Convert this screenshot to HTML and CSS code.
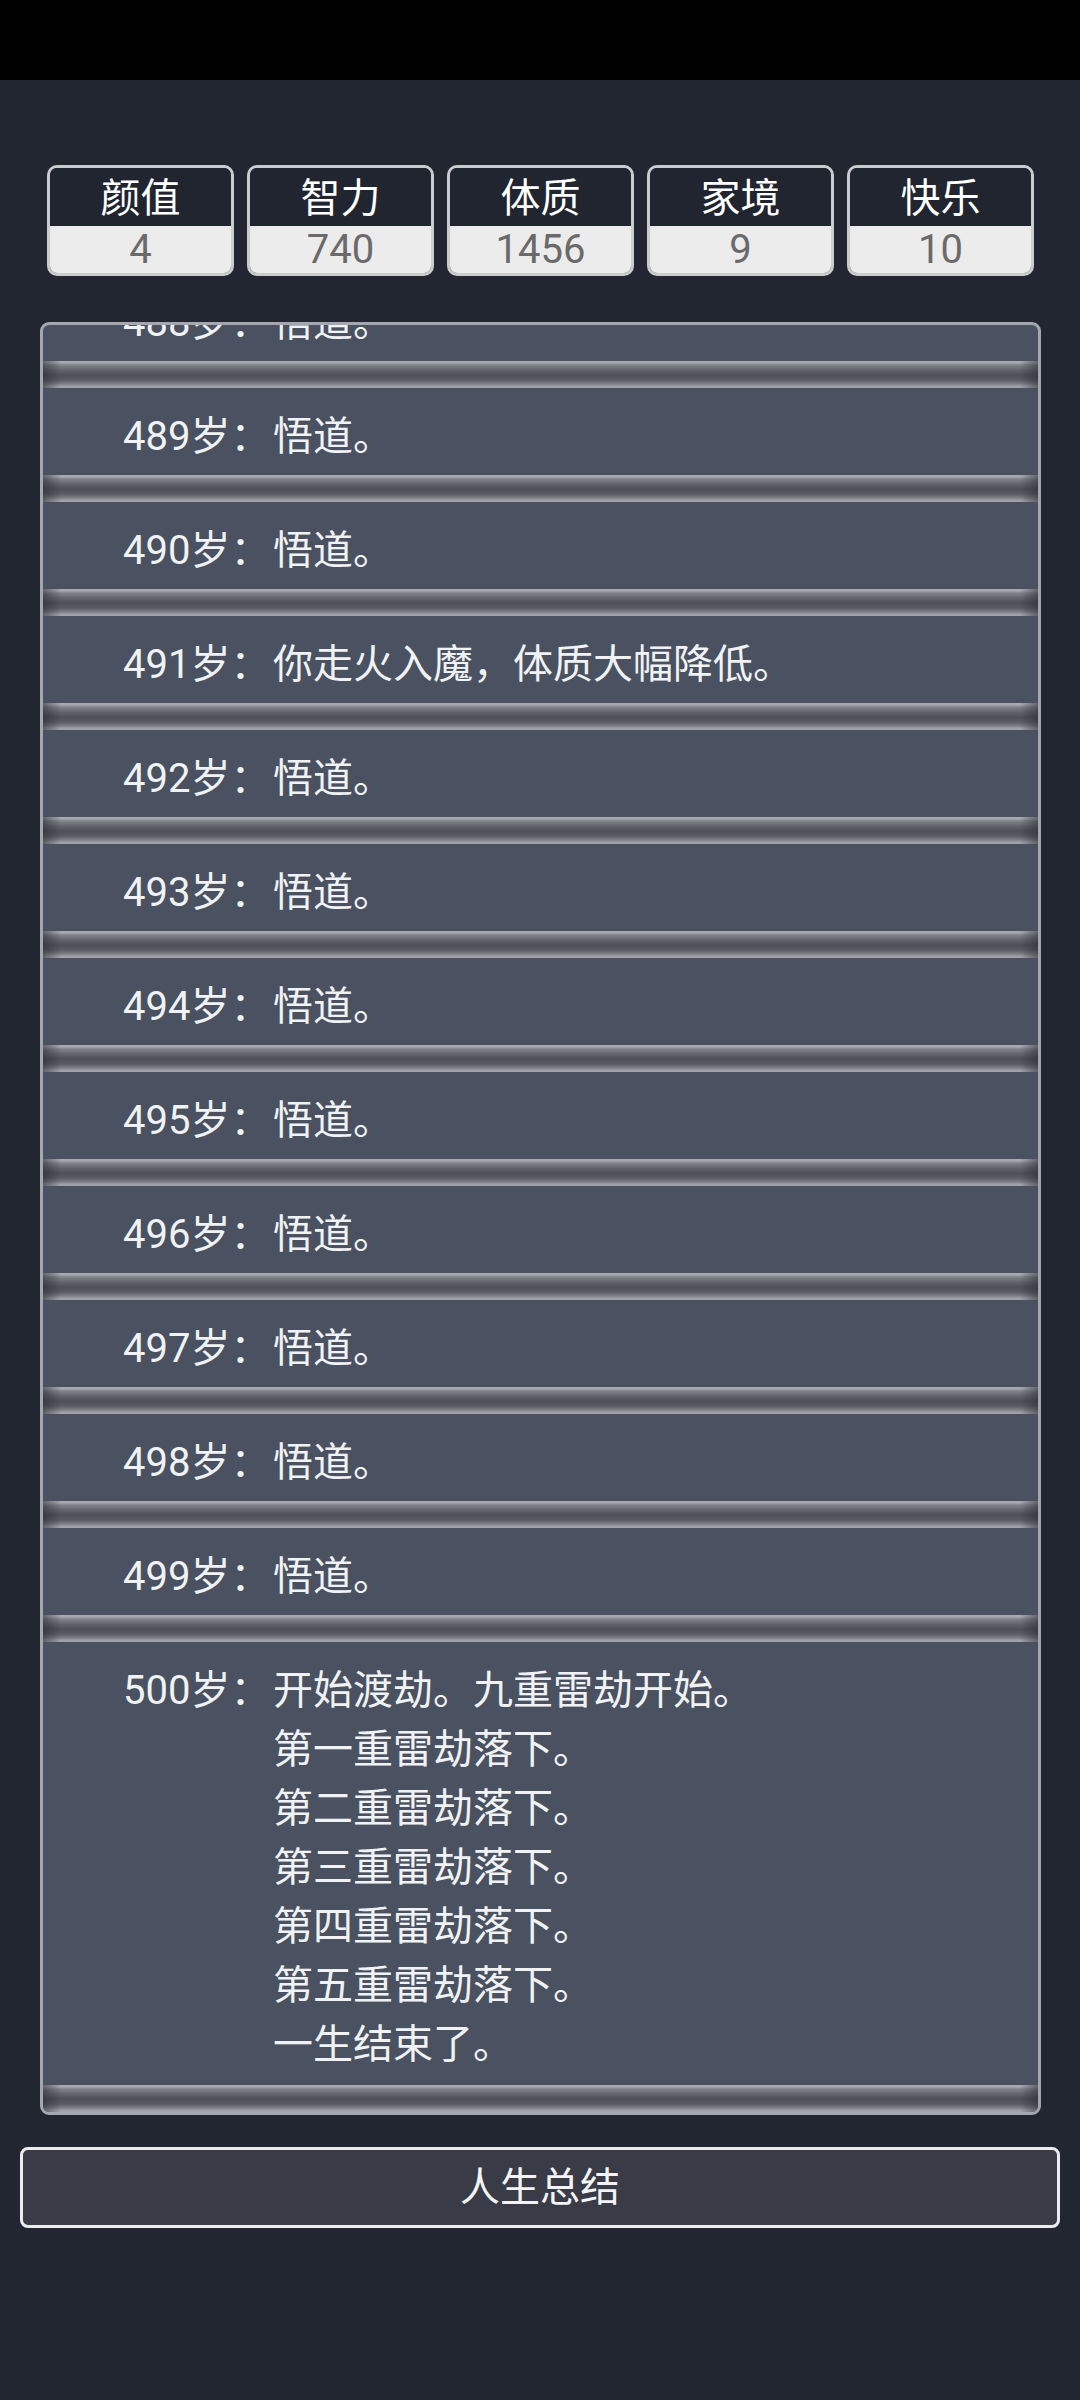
FILE: index.html
```html
<!DOCTYPE html>
<html lang="zh-CN">
<head>
<meta charset="utf-8">
<meta name="viewport" content="width=1080">
<title>人生重开</title>
<link rel="stylesheet" href="styles.css">
</head>
<body>
<div class="statusbar"></div>
<main class="page">
  <section class="stats">
    <div class="stat"><div class="stat-name">颜值</div><div class="stat-val">4</div></div>
    <div class="stat"><div class="stat-name">智力</div><div class="stat-val">740</div></div>
    <div class="stat"><div class="stat-name">体质</div><div class="stat-val">1456</div></div>
    <div class="stat"><div class="stat-name">家境</div><div class="stat-val">9</div></div>
    <div class="stat"><div class="stat-name">快乐</div><div class="stat-val">10</div></div>
  </section>
  <section class="log">
    <ul class="log-list">
      <li class="row"><span class="age">487岁：</span><span class="msg">悟道。</span></li>
      <li class="row"><span class="age">488岁：</span><span class="msg">悟道。</span></li>
      <li class="row"><span class="age">489岁：</span><span class="msg">悟道。</span></li>
      <li class="row"><span class="age">490岁：</span><span class="msg">悟道。</span></li>
      <li class="row"><span class="age">491岁：</span><span class="msg">你走火入魔，体质大幅降低。</span></li>
      <li class="row"><span class="age">492岁：</span><span class="msg">悟道。</span></li>
      <li class="row"><span class="age">493岁：</span><span class="msg">悟道。</span></li>
      <li class="row"><span class="age">494岁：</span><span class="msg">悟道。</span></li>
      <li class="row"><span class="age">495岁：</span><span class="msg">悟道。</span></li>
      <li class="row"><span class="age">496岁：</span><span class="msg">悟道。</span></li>
      <li class="row"><span class="age">497岁：</span><span class="msg">悟道。</span></li>
      <li class="row"><span class="age">498岁：</span><span class="msg">悟道。</span></li>
      <li class="row"><span class="age">499岁：</span><span class="msg">悟道。</span></li>
      <li class="row"><span class="age">500岁：</span><span class="msg">开始渡劫。九重雷劫开始。<br>第一重雷劫落下。<br>第二重雷劫落下。<br>第三重雷劫落下。<br>第四重雷劫落下。<br>第五重雷劫落下。<br>一生结束了。</span></li>
    </ul>
  </section>
  <button class="summary" type="button">人生总结</button>
</main>
</body>
</html>
```

FILE: styles.css
```css
* { box-sizing: border-box; }

html, body {
  margin: 0;
  padding: 0;
  background: #222631;
}

body {
  width: 1080px;
  height: 2400px;
  overflow: hidden;
  font-family: Roboto, "Noto Sans CJK SC", "Noto Sans", sans-serif;
  color: #f2f3f5;
}

.statusbar {
  height: 80px;
  background: #000;
}

.page {
  display: flex;
  flex-direction: column;
  align-items: stretch;
}

/* ---------- stats ---------- */
.stats {
  display: flex;
  gap: 13px;
  padding: 85px 46px 0 47px;
}

.stat {
  flex: 1 1 0;
  border: 3px solid #cacbcd;
  border-radius: 10px;
  overflow: hidden;
  text-align: center;
  font-size: 40px;
}

.stat-name {
  background: #212530;
  color: #ffffff;
  height: 58px;
  line-height: 54px;
  padding-top: 4px;
}

.stat-val {
  background: #ececec;
  color: #6a6a6a;
  line-height: 47px;
  height: 47px;
}

/* ---------- log panel ---------- */
.log {
  margin: 46px 39px 0 40px;
  height: 1793px;
  border: 3px solid #a4a7ad;
  border-radius: 9px;
  background: #4a5262;
  overflow: hidden;
  display: flex;
  flex-direction: column;
  justify-content: flex-end;
}

.log-list {
  list-style: none;
  margin: 0;
  padding: 0;
  flex: none;
}

.row {
  display: flex;
  align-items: flex-start;
  padding: 19px 20px 9px 80px;
  font-size: 40px;
  line-height: 59px;
  color: #f1f2f4;
  position: relative;
  margin-bottom: 27px;
}

.row:last-child {
  padding-bottom: 11px;
}

.row::after {
  content: "";
  position: absolute;
  left: 0;
  right: 0;
  bottom: -27px;
  height: 27px;
  background:
    linear-gradient(to right, rgba(40,42,48,.55) 0, rgba(40,42,48,0) 18px, rgba(40,42,48,0) calc(100% - 18px), rgba(40,42,48,.55) 100%),
    linear-gradient(to bottom, #a8abb1 0, #a3a6ac 2px, #80838a 4px, #62656c 9px, #4d5057 14px, #595c63 19px, #7d8087 23px, #9b9ea4 25px, #a1a4aa 27px);
}

.age {
  flex: none;
  width: 150px;
  white-space: nowrap;
}

.msg {
  flex: 1 1 auto;
}

/* ---------- button ---------- */
.summary {
  margin: 32px 20px 0 20px;
  height: 81px;
  background: #393c47;
  border: 3px solid #ececee;
  border-radius: 8px;
  color: #f4f4f6;
  font-family: Roboto, "Noto Sans CJK SC", "Noto Sans", sans-serif;
  font-size: 40px;
  line-height: 1;
  padding: 0;
}
```
